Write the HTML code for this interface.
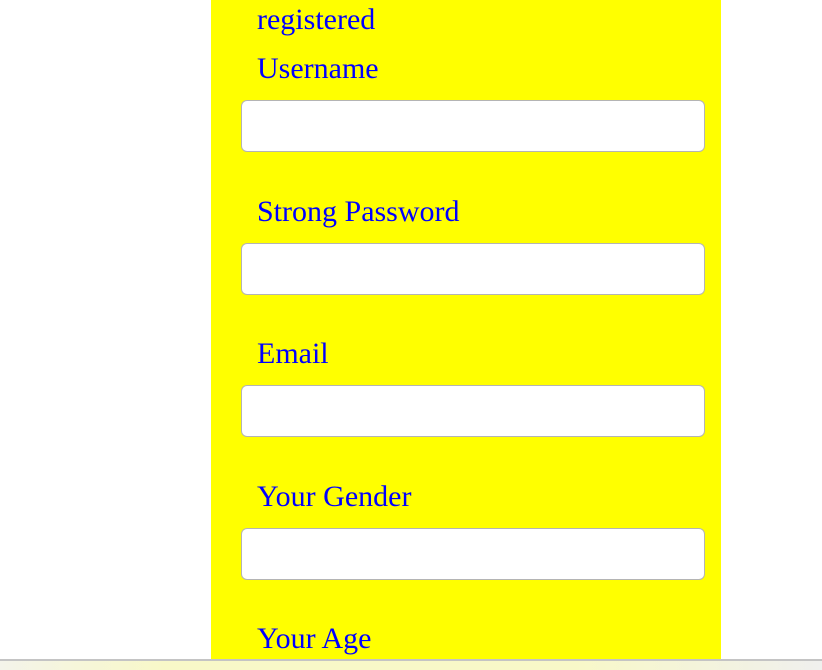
<!DOCTYPE html>
<html><head><style>
html,body{margin:0;padding:0;width:822px;height:670px;overflow:hidden;background:#fff;position:relative}
.panel{position:absolute;left:211px;top:0;width:510px;height:659px;background:#ffff00}
.l{position:absolute;left:257px;font-family:"Liberation Serif",serif;font-size:30px;color:#0000ff;line-height:32px;white-space:nowrap}
.i{position:absolute;left:241px;width:462px;height:50px;background:#fff;border:1px solid #b4b4b4;border-radius:6px}
.bar{position:absolute;left:0;top:659px;width:822px;height:11px;border-top:2px solid #c4c4c4;box-sizing:border-box;background:linear-gradient(to right,#f4f4ea 0%,#f8f8c8 20%,#f8f8c8 70%,#f0f0ee 100%)}
</style></head><body>
<div class="panel"></div>
<div class="l" style="top:4px">registered</div>
<div class="l" style="top:53px">Username</div>
<div class="i" style="top:100px"></div>
<div class="l" style="top:196px">Strong Password</div>
<div class="i" style="top:243px"></div>
<div class="l" style="top:338px">Email</div>
<div class="i" style="top:385px"></div>
<div class="l" style="top:481px">Your Gender</div>
<div class="i" style="top:528px"></div>
<div class="l" style="top:623px">Your Age</div>
<div class="bar"></div>
</body></html>
